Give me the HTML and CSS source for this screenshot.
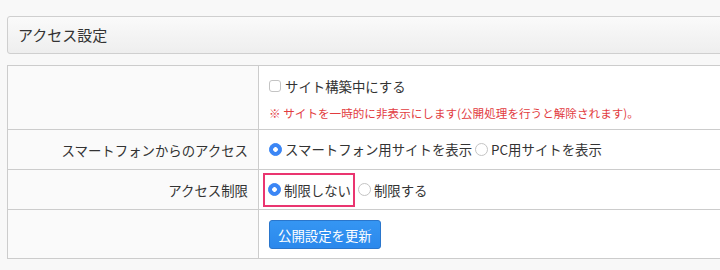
FILE: index.html
```html
<!DOCTYPE html>
<html>
  <head>
    <meta charset="UTF-8">
    <title>アクセス設定</title>
    <link rel="stylesheet" href="styles.css">
  </head>
  <body>
    <div class="page">
      <div class="panel-heading">アクセス設定</div>
      <table class="form-table">
        <tr class="row-tall">
          <th></th>
          <td>
            <label class="opt"><input type="checkbox">サイト構築中にする</label>
            <p class="note">※ サイトを一時的に非表示にします(公開処理を行うと解除されます)。</p>
          </td>
        </tr>
        <tr>
          <th>スマートフォンからのアクセス</th>
          <td>
            <label class="opt"><input type="radio" name="sp" checked>スマートフォン用サイトを表示</label>
            <label class="opt"><input type="radio" name="sp">PC用サイトを表示</label>
          </td>
        </tr>
        <tr>
          <th>アクセス制限</th>
          <td>
            <span class="mark"><label class="opt"><input type="radio" name="limit" checked>制限しない</label></span>
            <label class="opt"><input type="radio" name="limit">制限する</label>
          </td>
        </tr>
        <tr class="row-btn">
          <th></th>
          <td><button class="btn" type="button">公開設定を更新</button></td>
        </tr>
      </table>
    </div>
  </body>
</html>
```

FILE: styles.css
```css
* {
  margin: 0;
  padding: 0;
  box-sizing: border-box;
}

body {
  background-color: #f8f8f8;
  font-family: "Noto Sans CJK JP", "Noto Sans", sans-serif;
  color: #333;
  overflow: hidden;
}

.page {
  width: 780px;
  padding: 16px 0 0 7px;
}

.panel-heading {
  height: 38px;
  line-height: 36px;
  padding-left: 10px;
  font-size: 15px;
  border: 1px solid #cfcfcf;
  border-radius: 3px;
  background: linear-gradient(#fafafa, #eeeeee);
  margin-bottom: 11px;
}

.form-table {
  width: 760px;
  border-collapse: collapse;
  table-layout: fixed;
  font-size: 13.4px;
}

.form-table th,
.form-table td {
  border: 1px solid #cccccc;
  height: 40px;
  vertical-align: middle;
}

.form-table th {
  width: 251px;
  background-color: #fafafa;
  font-weight: normal;
  text-align: right;
  padding: 0 10px;
}

.form-table td {
  background-color: #fff;
  padding: 0 10px;
}

.form-table .row-tall td {
  height: 64px;
  padding: 9px 10px 6px;
}

.form-table .row-btn td {
  height: 49px;
}

.opt {
  display: inline-flex;
  align-items: center;
  line-height: 20px;
}

.opt input {
  -webkit-appearance: none;
  appearance: none;
  width: 13px;
  height: 13px;
  margin: 0 3px 0 0;
  border: 1px solid #c4c4c4;
  background-color: #fff;
}

.opt input[type="checkbox"] {
  width: 12px;
  height: 12px;
  border-radius: 3px;
  margin-right: 4px;
}

.opt input[type="radio"] {
  border-radius: 50%;
}

.opt input[type="radio"]:checked {
  border-color: #3b86f5;
  background: radial-gradient(circle, #fff 0 2px, #3b86f5 2.6px);
}

.note {
  margin-top: 7px;
  line-height: 20px;
  font-size: 11.6px;
  color: #e23c3f;
}

.mark {
  display: inline-flex;
  align-items: center;
  height: 34px;
  padding: 0 2px 0 3px;
  margin-left: -6px;
  border: 2px solid #ea3570;
}

.btn {
  height: 29px;
  padding: 0 8px;
  font-family: inherit;
  font-size: 13.4px;
  color: #fff;
  background: linear-gradient(#3596f3, #2b88ec);
  border: 1px solid #2a76cc;
  border-radius: 3px;
  margin-top: 1px;
}
```
